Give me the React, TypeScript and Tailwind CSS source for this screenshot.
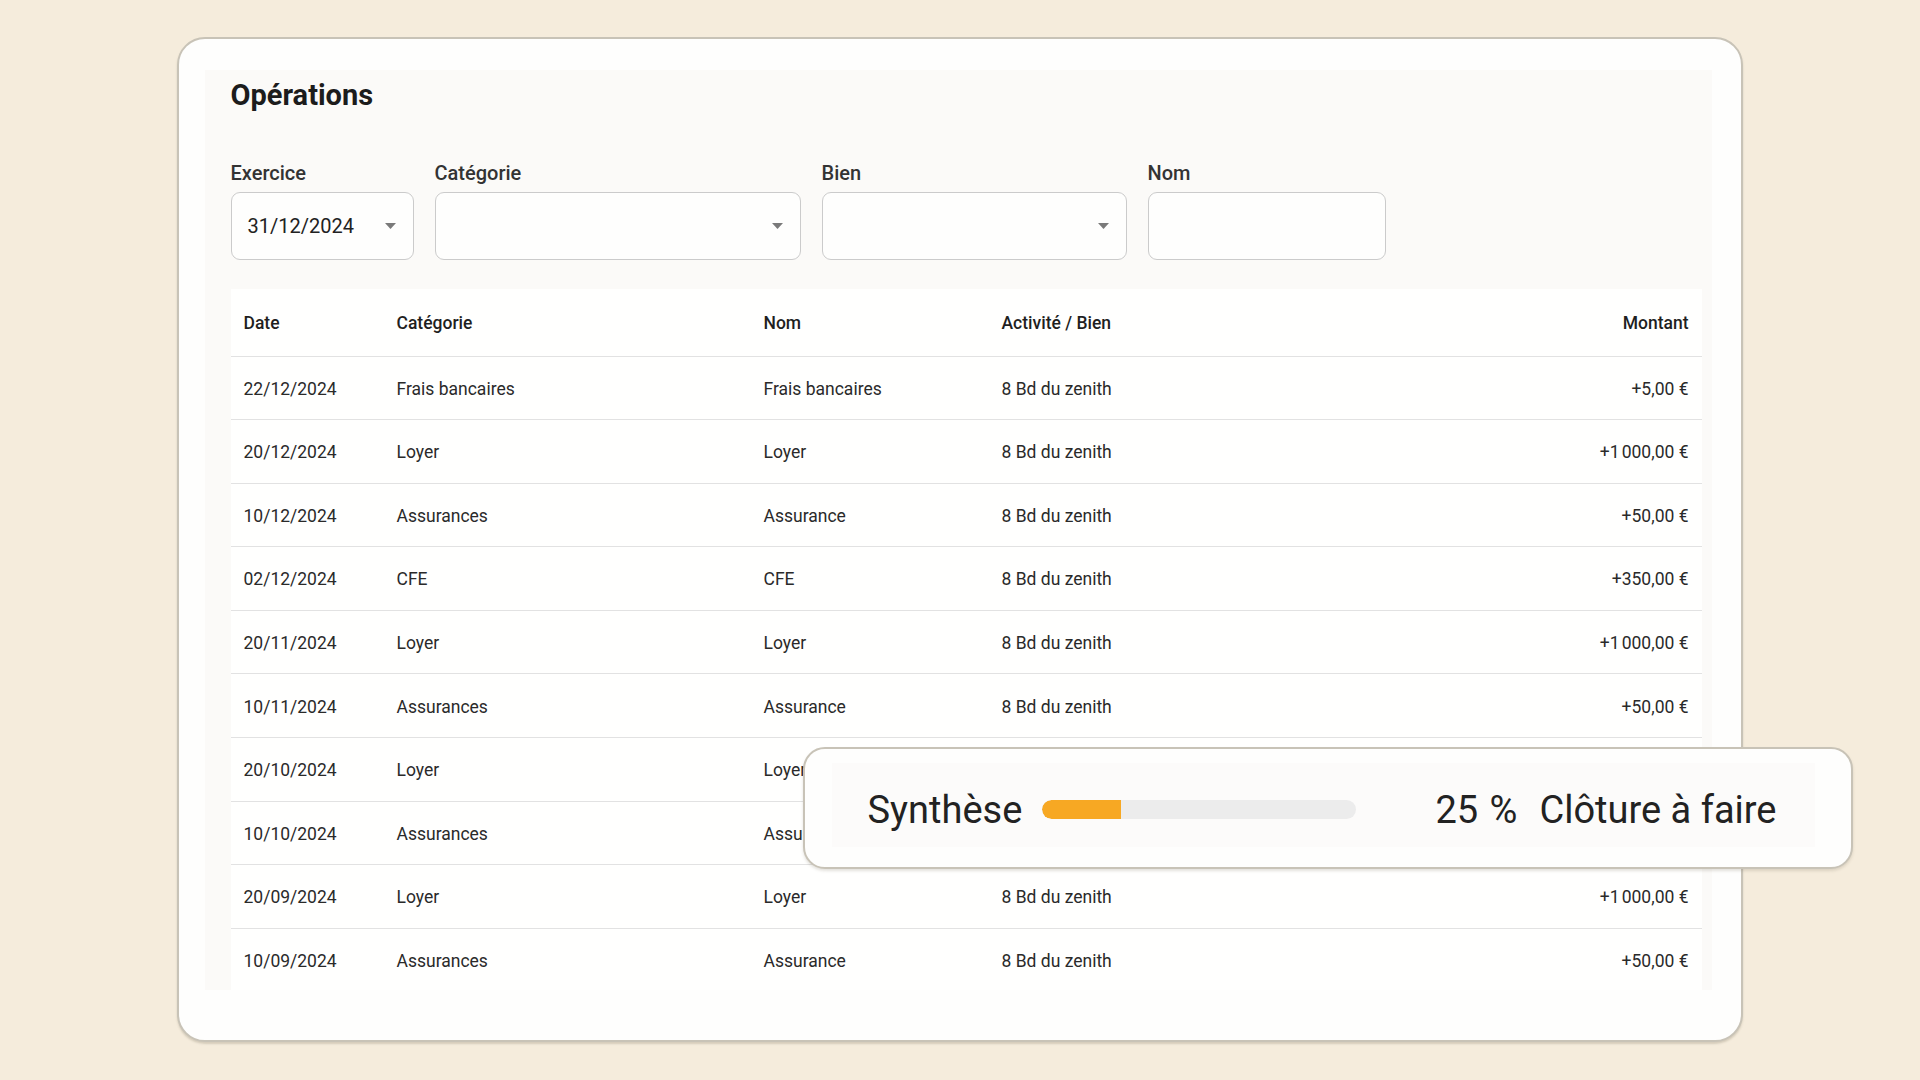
import React from "react";

type Operation = {
  date: string;
  categorie: string;
  nom: string;
  bien: string;
  montant: string;
};

const NNBSP = "\u202f";

const operations: Operation[] = [
  { date: "22/12/2024", categorie: "Frais bancaires", nom: "Frais bancaires", bien: "8 Bd du zenith", montant: "+5,00 €" },
  { date: "20/12/2024", categorie: "Loyer", nom: "Loyer", bien: "8 Bd du zenith", montant: `+1${NNBSP}000,00 €` },
  { date: "10/12/2024", categorie: "Assurances", nom: "Assurance", bien: "8 Bd du zenith", montant: "+50,00 €" },
  { date: "02/12/2024", categorie: "CFE", nom: "CFE", bien: "8 Bd du zenith", montant: "+350,00 €" },
  { date: "20/11/2024", categorie: "Loyer", nom: "Loyer", bien: "8 Bd du zenith", montant: `+1${NNBSP}000,00 €` },
  { date: "10/11/2024", categorie: "Assurances", nom: "Assurance", bien: "8 Bd du zenith", montant: "+50,00 €" },
  { date: "20/10/2024", categorie: "Loyer", nom: "Loyer", bien: "8 Bd du zenith", montant: `+1${NNBSP}000,00 €` },
  { date: "10/10/2024", categorie: "Assurances", nom: "Assurance", bien: "8 Bd du zenith", montant: "+50,00 €" },
  { date: "20/09/2024", categorie: "Loyer", nom: "Loyer", bien: "8 Bd du zenith", montant: `+1${NNBSP}000,00 €` },
  { date: "10/09/2024", categorie: "Assurances", nom: "Assurance", bien: "8 Bd du zenith", montant: "+50,00 €" },
];

function Caret() {
  return (
    <svg width="11" height="6" viewBox="0 0 11 6" className="shrink-0">
      <path d="M0 0 L11 0 L5.5 6 Z" fill="#7a7a7a" />
    </svg>
  );
}

function Field({
  label,
  width,
  value,
  select,
}: {
  label: string;
  width: string;
  value?: string;
  select?: boolean;
}) {
  return (
    <div className={`flex flex-col ${width}`}>
      <span className="text-[20px] leading-[24px] font-medium text-[#333333]">{label}</span>
      <div className="mt-[7px] h-[68px] rounded-[9px] border-[1.5px] border-[#cbcbcb] bg-[#fefefd] flex items-center pl-[16px] pr-[17px]">
        <span className="flex-1 text-[20px] text-[#222222]">{value ?? ""}</span>
        {select && <Caret />}
      </div>
    </div>
  );
}

export default function App() {
  return (
    <div
      className="relative min-h-screen w-full bg-[#f5ecdc] pt-[37px] pl-[177px]"
      style={{ fontFamily: "Roboto, 'Noto Sans', sans-serif" }}
    >
      {/* Main card */}
      <div className="w-[1566px] h-[1005px] rounded-[28px] border-[2.5px] border-[#c8c3b7] bg-[#fefefd] shadow-[0_2px_2px_rgba(120,110,90,0.25)]">
        <div className="mt-[30.5px] ml-[25.5px] w-[1507px] h-[920px] bg-[#fbfaf8] pl-[26px] overflow-hidden">
          <h1 className="pt-[9px] text-[29px] leading-[32px] font-bold text-[#1c1c1c]">Opérations</h1>

          {/* Filters */}
          <div className="mt-[50px] flex gap-[21px]">
            <Field label="Exercice" width="w-[183px]" value="31/12/2024" select />
            <Field label="Catégorie" width="w-[366px]" select />
            <Field label="Bien" width="w-[305px]" select />
            <Field label="Nom" width="w-[238px]" />
          </div>

          {/* Operations table */}
          <div className="mt-[29px] w-[1471px] bg-[#fffffe]">
            <div className="grid grid-cols-[153px_367px_238px_1fr_auto] h-[68px] items-center border-b border-[#e2e2e2] text-[17.5px] font-medium text-[#1f1f1f] pt-[3px]">
              <span className="pl-[13px]">Date</span>
              <span className="pl-[13px]">Catégorie</span>
              <span className="pl-[13px]">Nom</span>
              <span className="pl-[13px]">Activité / Bien</span>
              <span className="pr-[13px] text-right">Montant</span>
            </div>
            {operations.map((op, i) => (
              <div
                key={i}
                className="grid grid-cols-[153px_367px_238px_1fr_auto] h-[63.6px] items-center border-b border-[#e2e2e2] text-[17.5px] text-[#2a2a2a] pt-[2px]"
              >
                <span className="pl-[13px]">{op.date}</span>
                <span className="pl-[13px]">{op.categorie}</span>
                <span className="pl-[13px]">{op.nom}</span>
                <span className="pl-[13px]">{op.bien}</span>
                <span className="pr-[13px] text-right">{op.montant}</span>
              </div>
            ))}
          </div>
        </div>
      </div>

      {/* Floating synthesis card */}
      <div className="absolute left-[803px] top-[747px] w-[1050px] h-[122px] rounded-[22px] border-[2.5px] border-[#c8c3b7] bg-[#fefefd] shadow-[0_2px_3px_rgba(120,110,90,0.2)]">
        <div className="mt-[13.5px] ml-[26.5px] w-[983px] h-[84px] bg-[#fcfbfa] flex items-center justify-between pl-[36px] pr-[38px] pt-[10px]">
          <div className="flex items-center">
            <span className="text-[38px] leading-none text-[#222222]">Synthèse</span>
            <div className="ml-[20px] w-[314px] h-[19px] rounded-full bg-[#ececec] overflow-hidden">
              <div className="h-full bg-[#f7a823] rounded-l-full" style={{ width: "25%" }} />
            </div>
          </div>
          <div className="flex items-center text-[38px] leading-none text-[#222222]">
            <span className="[word-spacing:2px]">25 %</span>
            <span className="ml-[22px]">Clôture à faire</span>
          </div>
        </div>
      </div>
    </div>
  );
}
